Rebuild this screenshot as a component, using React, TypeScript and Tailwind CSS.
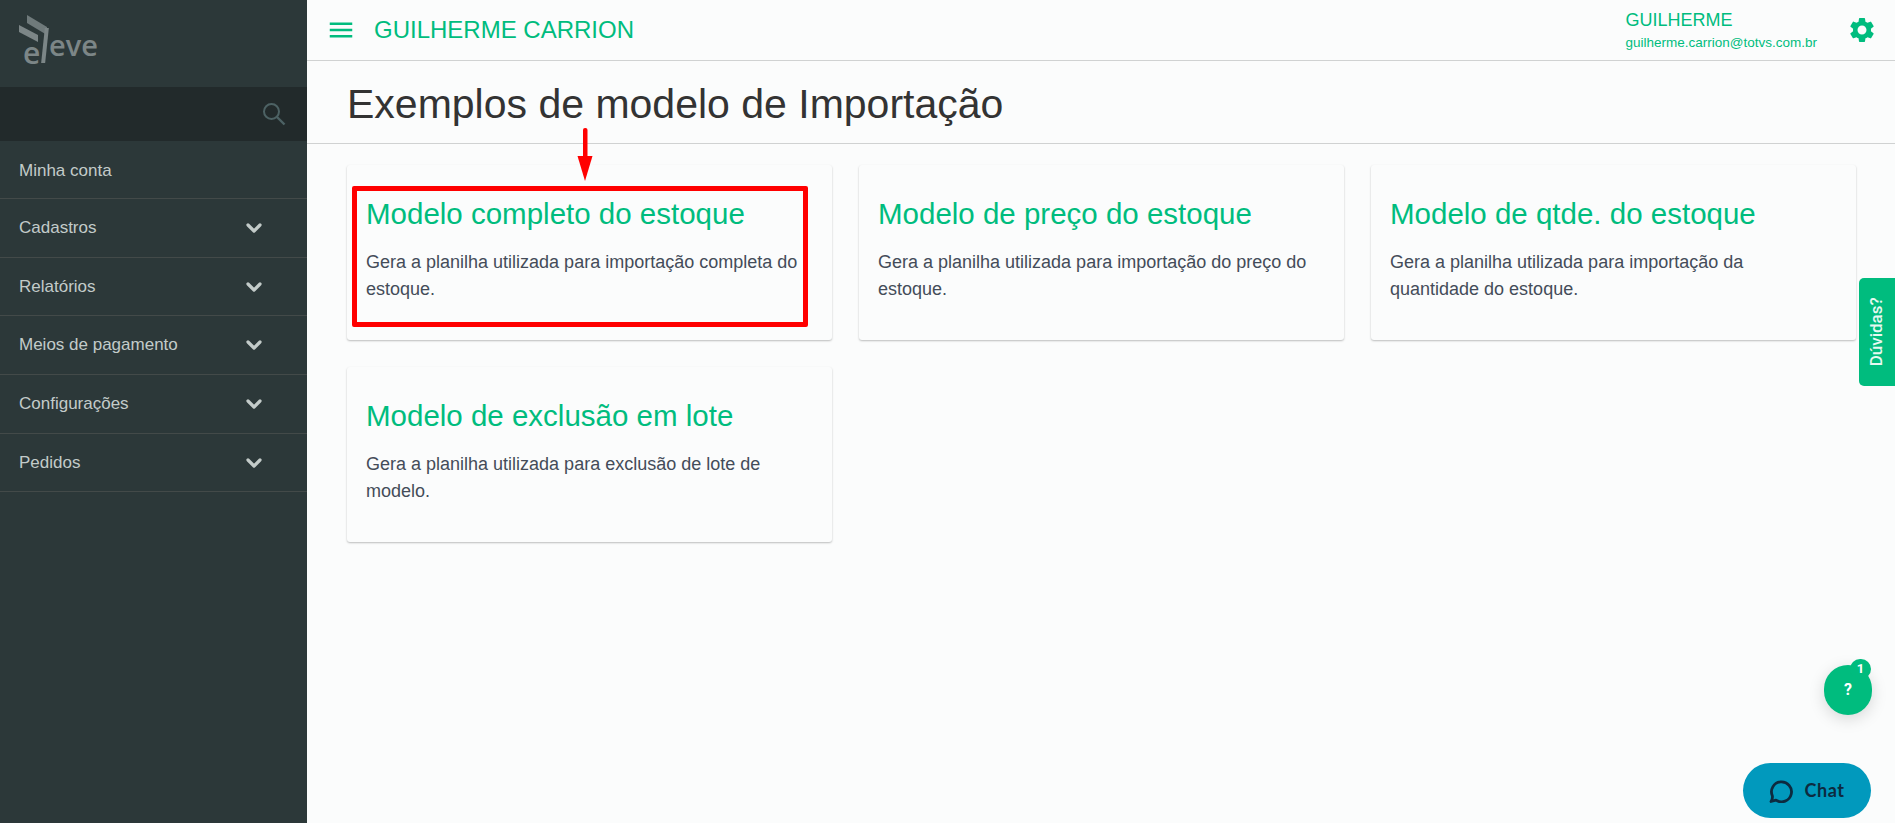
import { ChevronDown } from "lucide-react";
import { MdMenu, MdSettings } from "react-icons/md";

const menuItems = ["Cadastros", "Relatórios", "Meios de pagamento", "Configurações", "Pedidos"];

const cards = [
  { title: "Modelo completo do estoque", text: "Gera a planilha utilizada para importação completa do estoque." },
  { title: "Modelo de preço do estoque", text: "Gera a planilha utilizada para importação do preço do estoque." },
  { title: "Modelo de qtde. do estoque", text: "Gera a planilha utilizada para importação da quantidade do estoque." },
  { title: "Modelo de exclusão em lote", text: "Gera a planilha utilizada para exclusão de lote de modelo." },
];

function Logo() {
  return (
    <div className="relative h-[87px] w-full">
      <svg width="34" height="36" viewBox="0 0 34 36" className="absolute left-[17px] top-[13px]">
        <polygon points="10,2 30,14 30,22 10,10" fill="#6f7a7b" />
        <polygon points="2,12 21,22 21,29 2,19" fill="#7c8687" />
      </svg>
      <span className="absolute left-[23px] top-[38px] text-[30px] leading-[30px] font-semibold text-[#7c8687] font-['Open_Sans',sans-serif]">e</span>
      <span className="absolute left-[43px] top-[28px] h-[35px] w-[4px] -skew-x-6 bg-[#7c8687]" />
      <span className="absolute left-[49px] top-[30px] text-[29px] leading-[30px] font-semibold text-[#7c8687] font-['Open_Sans',sans-serif]">eve</span>
    </div>
  );
}

function Sidebar() {
  return (
    <aside className="flex h-full w-[307px] shrink-0 flex-col bg-[#2c3839]">
      <Logo />
      <div className="flex h-[54px] items-center justify-end bg-[#222a2b] pr-[21px]">
        <svg width="24" height="24" viewBox="0 0 24 24" fill="none" stroke="#4d6264" strokeWidth="2">
          <circle cx="9.5" cy="9.5" r="7.5" />
          <path d="M15 15 L22.5 22.5" strokeWidth="2.4" />
        </svg>
      </div>
      <div className="flex h-[58px] items-center border-b border-[#434a49] pl-[19px] pt-[2px] text-[17px] text-[#c3cbc9]">Minha conta</div>
      {menuItems.map((label) => (
        <div key={label} className="flex h-[58.7px] items-center justify-between border-b border-[#434a49] pl-[19px] pr-[41px] text-[17px] text-[#c3cbc9]">
          <span>{label}</span>
          <ChevronDown size={24} strokeWidth={3.2} className="text-[#c3cbc9]" />
        </div>
      ))}
    </aside>
  );
}

function Card({ title, text }: { title: string; text: string }) {
  return (
    <div className="h-[175px] rounded-[3px] bg-[#fbfcfc] px-[19px] pt-[30px] shadow-[0_1px_2px_rgba(0,0,0,0.25)]">
      <h2 className="text-[29.5px] leading-[38px] text-[#00bc7e]">{title}</h2>
      <p className="mt-[16px] text-[18px] leading-[27px] text-[#444c59]">{text}</p>
    </div>
  );
}

export default function App() {
  return (
    <div className="relative flex h-[823px] w-[1895px] overflow-hidden bg-[#fbfcfc] font-['Liberation_Sans',Arial,sans-serif]">
      <Sidebar />
      <main className="flex min-w-0 flex-1 flex-col">
        <div className="flex h-[61px] shrink-0 items-center border-b border-[#d0d2d2] pl-[19px] pr-[18px] text-[#00bc7e]">
          <MdMenu size={30} className="mr-[18px]" />
          <span className="text-[24px] leading-none">GUILHERME CARRION</span>
          <div className="ml-auto mr-[30px] flex flex-col">
            <span className="text-[18px] leading-[24px]">GUILHERME</span>
            <span className="mt-[2px] text-[13.5px] leading-[18px]">guilherme.carrion@totvs.com.br</span>
          </div>
          <MdSettings size={30} className="text-[#00bc7e]" />
        </div>
        <div className="flex h-[83px] shrink-0 items-center border-b border-[#d0d2d2] pl-[40px] pt-[4px]">
          <h1 className="text-[41px] leading-none text-[#333333]">Exemplos de modelo de Importação</h1>
        </div>
        <div className="grid grid-cols-[485px_485px_485px] gap-x-[27px] gap-y-[27px] pl-[40px] pt-[21px]">
          {cards.map((c) => (
            <Card key={c.title} title={c.title} text={c.text} />
          ))}
        </div>
      </main>

      {/* annotation over first card */}
      <div className="absolute left-[352px] top-[186px] h-[141px] w-[456px] rounded-[2px] border-[5px] border-[#ff0000]" />
      <svg width="16" height="54" viewBox="0 0 16 54" className="absolute left-[577px] top-[127px]">
        <rect x="6" y="1" width="4.5" height="30" rx="2" fill="#ff0000" />
        <polygon points="0.5,29 15.5,29 8,54" fill="#ff0000" />
      </svg>

      <div className="absolute right-0 top-[278px] flex h-[108px] w-[36px] items-center justify-center rounded-l-[5px] bg-[#00bc7e]">
        <span className="-rotate-90 whitespace-nowrap text-[17px] font-medium text-[#e6f8f1] font-['Roboto',sans-serif]">Dúvidas?</span>
      </div>

      <div className="absolute left-[1824px] top-[665px] flex h-[50px] w-[48px] items-center justify-center rounded-full bg-[#00bc7e] text-[16px] font-bold text-white shadow-[0_4px_16px_rgba(0,0,0,0.15)] font-['Roboto',sans-serif]">?</div>
      <div className="absolute left-[1850px] top-[659px] flex h-[20px] w-[21px] items-center justify-center rounded-full bg-[#00bc7e] text-[13px] font-bold text-white font-['Roboto',sans-serif]">1</div>

      <div className="absolute left-[1743px] top-[763px] flex h-[55px] w-[128px] items-center justify-center gap-[11px] rounded-full bg-[#0199bd]">
        <svg width="24" height="24" viewBox="0 0 24 24" fill="none" stroke="#0d2a3f" strokeWidth="2.8" strokeLinecap="round" strokeLinejoin="round">
          <path d="M2 22.5 L7 21.2 A10 10 0 1 0 3.4 17 Q3.8 20 2 22.5 Z" />
        </svg>
        <span className="text-[18px] font-bold tracking-[0.6px] text-[#0d2a3f] font-['Lato',sans-serif]">Chat</span>
      </div>
    </div>
  );
}
